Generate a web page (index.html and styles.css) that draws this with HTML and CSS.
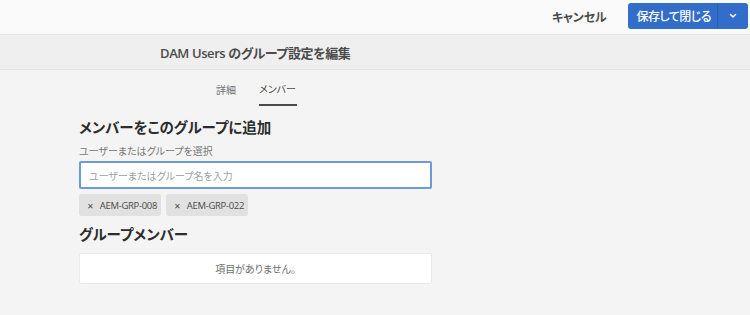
FILE: index.html
```html
<!DOCTYPE html>
<html lang="ja">
<head>
<meta charset="utf-8">
<link rel="stylesheet" href="styles.css">
</head>
<body>
<header class="topbar">
  <button class="cancel">キャンセル</button>
  <div class="save">
    <span class="save-label">保存して閉じる</span>
    <span class="save-toggle"><svg width="8" height="6" viewBox="0 0 8 6"><path d="M1.5 1.5 L4 4 L6.5 1.5" fill="none" stroke="#fff" stroke-width="1.5" stroke-linecap="round" stroke-linejoin="round"/></svg></span>
  </div>
</header>
<div class="titlebar"><h1 class="title">DAM Users のグループ設定を編集</h1></div>
<nav class="tabs">
  <span class="tab">詳細</span>
  <span class="tab active">メンバー</span>
</nav>
<main class="content">
  <h2 class="heading">メンバーをこのグループに追加</h2>
  <label class="label">ユーザーまたはグループを選択</label>
  <div class="input">ユーザーまたはグループ名を入力</div>
  <div class="tags">
    <span class="tag"><span class="x">✕</span>AEM-GRP-008</span>
    <span class="tag"><span class="x">✕</span>AEM-GRP-022</span>
  </div>
  <h2 class="heading heading2">グループメンバー</h2>
  <div class="empty">項目がありません。</div>
</main>
</body>
</html>
```
FILE: styles.css
```css
* { box-sizing: border-box; }
html, body { margin: 0; padding: 0; }
body {
  background: #f4f4f4;
  font-family: "Open Sans", "Noto Sans CJK JP", sans-serif;
  font-feature-settings: "palt";
  color: #4b4b4b;
  width: 750px;
  height: 315px;
  overflow: hidden;
}
.topbar {
  height: 35px;
  background: #fafafa;
  border-bottom: 1px solid #e6e6e6;
  display: flex;
  align-items: center;
  justify-content: flex-end;
  padding-right: 2px;
}
.cancel {
  border: 0;
  background: none;
  font: 600 12px "Open Sans", "Noto Sans CJK JP", sans-serif;
  font-feature-settings: "palt";
  letter-spacing: -0.2px;
  color: #4b4b4b;
  padding: 0;
  margin-right: 22px;
  margin-top: -1px;
}
.save {
  display: flex;
  height: 26px;
  margin-top: -3px;
  background: #326ec9;
  border-radius: 3px;
  color: #fff;
  font-size: 12px;
  letter-spacing: -0.5px;
}
.save-label {
  display: flex;
  align-items: center;
  padding: 0 6px 0 8px;
  border-right: 1px solid #2a60b2;
  font-weight: 500;
}
.save-toggle {
  display: flex;
  align-items: center;
  justify-content: center;
  width: 30px;
}
.titlebar {
  height: 35px;
  background: #efefef;
  border-bottom: 1px solid #e4e4e4;
  display: flex;
  align-items: center;
  padding-left: 160px;
}
.title {
  margin: 0;
  font-size: 13px;
  font-weight: 600;
  color: #4b4b4b;
  letter-spacing: -0.4px;
}
.tabs {
  display: flex;
  gap: 23px;
  padding-left: 216px;
  height: 36px;
}
.tab {
  font-size: 10px;
  color: #707070;
  display: flex;
  align-items: center;
  padding-top: 2px;
  height: 100%;
}
.tab.active {
  color: #4b4b4b;
  border-bottom: 2px solid #4b4b4b;
  padding-right: 1px;
}
.content {
  padding: 12px 0 0 79px;
  width: 432px;
}
.heading {
  margin: 0;
  font-size: 14.5px;
  font-weight: 700;
  color: #2c2c2c;
  line-height: 20px;
}
.label {
  display: block;
  margin-top: 6px;
  font-size: 10px;
  color: #777;
  line-height: 14px;
}
.input {
  margin-top: 3px;
  height: 28px;
  background: #fff;
  border: 2px solid #6e9ad8;
  border-radius: 2px;
  font-size: 10px;
  color: #a0a0a0;
  display: flex;
  align-items: center;
  padding-left: 8px;
}
.tags {
  display: flex;
  gap: 5px;
  margin-top: 5px;
}
.tag {
  height: 22px;
  width: 82px;
  background: #e1e1e1;
  border-radius: 3px;
  font-size: 9.5px;
  color: #4b4b4b;
  display: flex;
  align-items: center;
  padding-left: 8px;
  white-space: nowrap;
  letter-spacing: -0.3px;
}
.x {
  font-size: 8px;
  margin-right: 6px;
}
.heading2 {
  margin-top: 9px;
}
.empty {
  margin-top: 8px;
  height: 31px;
  background: #fff;
  border: 1px solid #eaeaea;
  border-radius: 2px;
  font-size: 10px;
  color: #6e6e6e;
  display: flex;
  align-items: center;
  justify-content: center;
}
```
